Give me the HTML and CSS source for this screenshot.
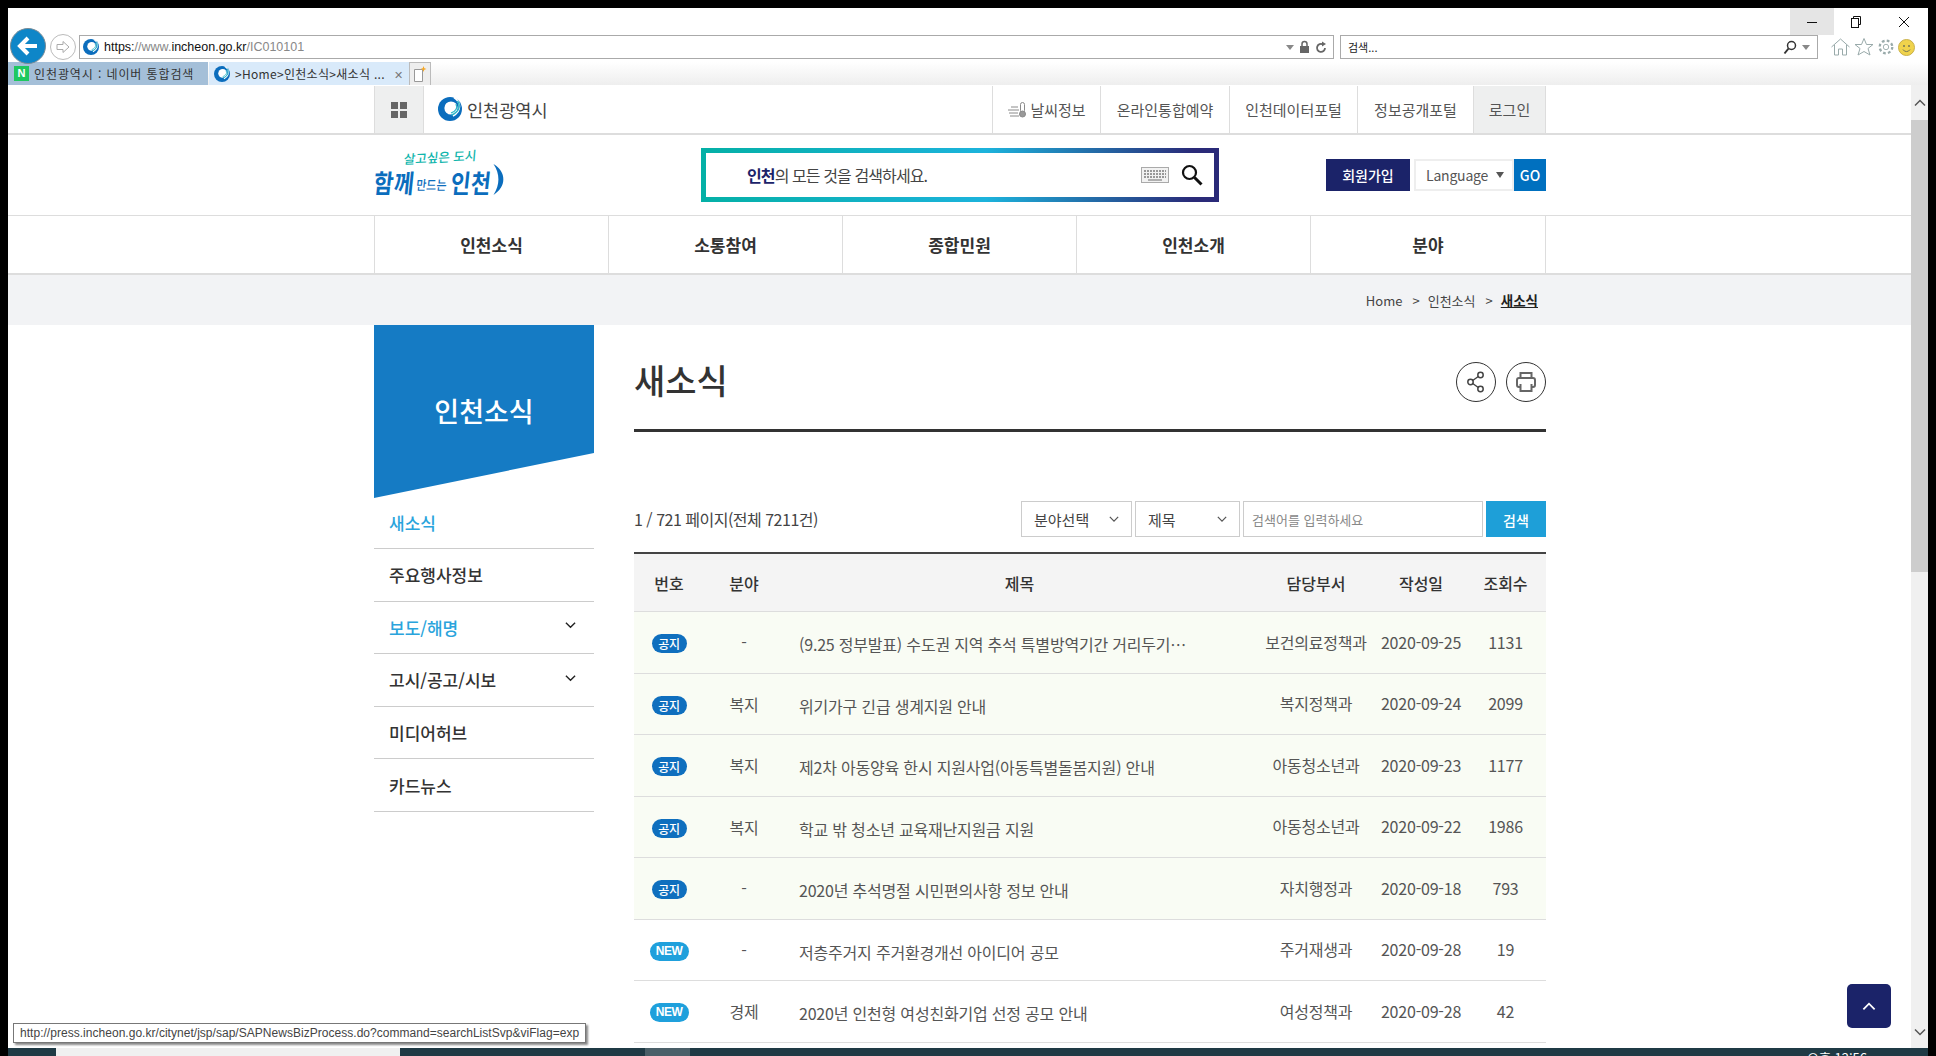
FILE: index.html
```html
<!DOCTYPE html>
<html lang="ko">
<head>
    <meta charset="UTF-8">
    <title>새소식 - 인천광역시</title>
    <link rel="stylesheet" href="styles.css">
</head>
<body>
    <svg class="defs" width="0" height="0">
        <symbol id="ic-mark" viewBox="0 0 24 24">
            <circle cx="12" cy="12" r="12" fill="#0b6dbd"/>
            <circle cx="13" cy="11" r="6.6" fill="#fff"/>
            <path d="M16 0.5C23 5 24 14 15 19" fill="none" stroke="#fff" stroke-width="1.6"/>
            <path d="M19.5 4C23 9 21 15 13.500 18" fill="none" stroke="#2cb5c8" stroke-width="1.5"/>
            <path d="M18 7C20 11 18 14 13 16" fill="none" stroke="#2cb5c8" stroke-width="1.3"/>
        </symbol>
        <symbol id="ic-chev" viewBox="0 0 12 8">
            <path d="M1 1.500L6 6.500L11 1.500" fill="none" stroke="currentColor" stroke-width="1.500"/>
        </symbol>
    </svg>
    <div class="screen">
        <div class="ie">
            <div class="ie-title">
                <span class="win-btn hot"><svg width="12" height="12"><path d="M1 6.500H11" stroke="#111" stroke-width="1"/></svg></span>
                <span class="win-btn"><svg width="12" height="12" fill="none" stroke="#111"><path d="M3.500 2.500V0.500H10.500V8.500H8.500"/><rect x="1.500" y="2.500" width="7" height="9"/></svg></span>
                <span class="win-btn"><svg width="12" height="12"><path d="M1 1L11 11M11 1L1 11" stroke="#111"/></svg></span>
            </div>
            <div class="ie-addr">
                <span class="nav-back"><svg width="22" height="22" viewBox="0 0 22 22"><path d="M11 3L3 11L11 19M3 11H20" fill="none" stroke="#fff" stroke-width="4"/></svg></span>
                <span class="nav-fwd"><svg width="16" height="16" viewBox="0 0 16 16"><path d="M8 2.500L14 8L8 13.500V10.500H2V5.500H8Z" fill="none" stroke="#aaa"/></svg></span>
                <div class="url-box">
                    <svg width="16" height="16"><use href="#ic-mark"/></svg>
                    <span class="url"><b>https:</b>//www.<b>incheon.go.kr</b>/IC010101</span>
                    <span class="url-tools">
                        <svg width="8" height="5"><path d="M0 0H8L4 5Z" fill="#888"/></svg>
                        <svg width="11" height="14"><path d="M3 6V4a2.500 2.500 0 0 1 5 0V6" fill="none" stroke="#666" stroke-width="1.500"/><rect x="1" y="6" width="9" height="7" fill="#666"/></svg>
                        <svg width="12" height="14" viewBox="0 0 12 14"><path d="M10 8a4 4 0 1 1-2-3.500" fill="none" stroke="#666" stroke-width="1.800"/><path d="M7 1.500L11 4L7 6.500Z" fill="#666"/></svg>
                    </span>
                </div>
                <div class="search-box">
                    <span class="search-hint">검색...</span>
                    <span class="url-tools">
                        <svg width="14" height="15" viewBox="0 0 14 15"><circle cx="8.500" cy="5.500" r="4" fill="none" stroke="#333" stroke-width="1.500"/><path d="M5.500 8.500L1.500 13.500" stroke="#333" stroke-width="2"/></svg>
                        <svg width="8" height="5"><path d="M0 0H8L4 5Z" fill="#888"/></svg>
                    </span>
                </div>
                <div class="ie-tools">
                    <svg width="21" height="20" viewBox="0 0 20 20" fill="none" stroke="#9aa"><path d="M1 10L10 2L19 10M4 8V18H8V12H12V18H16V8"/></svg>
                    <svg width="20" height="20" viewBox="0 0 20 20" fill="none" stroke="#9aa"><path d="M10 1.500L12.500 7.500H19L14 11.500L16 18L10 14.500L4 18L6 11.500L1 7.500H7.500Z"/></svg>
                    <svg width="18" height="18" viewBox="0 0 20 20" fill="none" stroke="#9aa"><circle cx="10" cy="10" r="3"/><circle cx="10" cy="10" r="7" stroke-width="2.500" stroke-dasharray="3 2.500"/></svg>
                    <svg width="17" height="17" viewBox="0 0 17 17"><circle cx="8.500" cy="8.500" r="8" fill="#f0d34c" stroke="#c9b04a"/><circle cx="6" cy="7" r="1" fill="#775"/><circle cx="11" cy="7" r="1" fill="#775"/><path d="M5 10.500a4 4 0 0 0 7 0" fill="none" stroke="#775"/></svg>
                </div>
            </div>
        </div>
        <div class="ie-tabs">
            <div class="tab tab-off">
                <span class="naver">N</span>
                <span class="tab-text">인천광역시 : 네이버 통합검색</span>
            </div>
            <div class="tab tab-on">
                <svg width="16" height="16"><use href="#ic-mark"/></svg>
                <span class="tab-text">&gt;Home&gt;인천소식&gt;새소식 ...</span>
                <span class="tab-x">✕</span>
            </div>
            <div class="tab-new">
                <svg width="14" height="17" viewBox="0 0 14 17"><path d="M1.500 3.500H9.500V15.500H1.500Z" fill="#fff" stroke="#999"/><path d="M10.500 0L11.300 2.200L13.500 3L11.300 3.800L10.500 6L9.700 3.800L7.500 3L9.700 2.200Z" fill="#f5a623"/></svg>
            </div>
        </div>

        <div class="viewport">
            <div class="page">
                <div class="topbar">
                    <div class="wrap topbar-in">
                        <a class="grid-btn"><svg width="16" height="16"><path d="M0 0h7v7H0zM9 0h7v7H9zM0 9h7v7H0zM9 9h7v7H9z" fill="#666"/></svg></a>
                        <div class="city">
                            <svg width="24" height="24"><use href="#ic-mark"/></svg>
                            <span>인천광역시</span>
                        </div>
                        <ul class="toplinks">
                            <li class="w-weather"><svg width="21" height="17" viewBox="0 0 21 17" fill="none" stroke="#8a8a8a"><path d="M1 9H12M2 12H11M3 15H12M4 6H11"/><rect x="13.500" y="1.500" width="4" height="10" rx="2"/><circle cx="15.500" cy="13" r="3" fill="#999"/></svg>날씨정보</li>
                            <li class="w-reserve">온라인통합예약</li>
                            <li class="w-data">인천데이터포털</li>
                            <li class="w-open">정보공개포털</li>
                            <li class="login">로그인</li>
                        </ul>
                    </div>
                </div>

                <div class="wrap header">
                    <div class="slogan">
                        <div class="slogan-top">살고싶은 도시</div>
                        <div class="slogan-main"><b>함께</b><small>만드는</small><b>인천</b></div>
                        <svg class="slogan-arc" width="16" height="33" viewBox="0 0 14 30"><path d="M2 1C14 8 14 22 2 29C8 20 8 10 2 1Z" fill="#0b6dbd"/></svg>
                    </div>
                    <div class="main-search">
                        <span class="ms-text"><b>인천</b>의 모든 것을 검색하세요.</span>
                        <svg width="28" height="16" viewBox="0 0 28 16"><rect x="0.500" y="0.500" width="27" height="15" fill="#f2f2f2" stroke="#aaa"/><path d="M3 4H25M3 7H25M3 10H25" stroke="#999" stroke-width="2" stroke-dasharray="2 1"/><path d="M7 13H21" stroke="#999" stroke-width="1.500"/></svg>
                        <svg class="ms-glass" width="22" height="22" viewBox="0 0 22 22"><circle cx="8.500" cy="8.500" r="6.500" fill="none" stroke="#111" stroke-width="2.200"/><path d="M13.500 13.500L20.500 20.500" stroke="#111" stroke-width="3"/></svg>
                    </div>
                    <div class="head-btns">
                        <a class="join">회원가입</a>
                        <div class="lang">Language<svg width="8" height="6"><path d="M0 0H8L4 6Z" fill="#555"/></svg></div>
                        <a class="go">GO</a>
                    </div>
                </div>

                <div class="gnb">
                    <ul class="wrap gnb-in">
                        <li>인천소식</li>
                        <li>소통참여</li>
                        <li>종합민원</li>
                        <li>인천소개</li>
                        <li>분야</li>
                    </ul>
                </div>

                <div class="crumb">
                    <div class="wrap crumb-in">
                        <span>Home</span><i>&gt;</i><span>인천소식</span><i>&gt;</i><strong>새소식</strong>
                    </div>
                </div>

                <div class="wrap content">
                    <aside class="side">
                        <h2 class="side-title">인천소식</h2>
                        <ul class="side-menu">
                            <li class="on">새소식</li>
                            <li>주요행사정보</li>
                            <li class="on">보도/해명<svg width="11" height="8"><use href="#ic-chev"/></svg></li>
                            <li>고시/공고/시보<svg width="11" height="8"><use href="#ic-chev"/></svg></li>
                            <li>미디어허브</li>
                            <li>카드뉴스</li>
                        </ul>
                    </aside>
                    <main class="main">
                        <div class="page-head">
                            <h1>새소식</h1>
                            <div class="head-icons">
                                <a class="circle"><svg width="20" height="22" viewBox="0 0 20 22" fill="none" stroke="#444" stroke-width="1.500"><circle cx="14.500" cy="4" r="2.700"/><circle cx="4.500" cy="11" r="2.700"/><circle cx="14.500" cy="18" r="2.700"/><path d="M12.300 5.500L6.700 9.500M6.700 12.500L12.300 16.500"/></svg></a>
                                <a class="circle"><svg width="20" height="22" viewBox="0 0 20 22" fill="none" stroke="#666" stroke-width="2"><path d="M4.500 7V2H15.500V7"/><rect x="1" y="7" width="18" height="9" rx="2"/><path d="M4.500 13V20H15.500V13" fill="#fff"/></svg></a>
                            </div>
                        </div>
                        <div class="toolbar">
                            <span class="count">1 / 721 페이지(전체 7211건)</span>
                            <div class="sel sel-field">분야선택<svg width="12" height="8"><use href="#ic-chev"/></svg></div>
                            <div class="sel sel-type">제목<svg width="12" height="8"><use href="#ic-chev"/></svg></div>
                            <input class="keyword" type="text" placeholder="검색어를 입력하세요">
                            <button class="btn-search" type="button">검색</button>
                        </div>
                        <table class="board">
                            <colgroup>
                                <col class="c-no"><col class="c-cat"><col class="c-title"><col class="c-dept"><col class="c-date"><col class="c-hit">
                            </colgroup>
                            <thead>
                                <tr><th>번호</th><th>분야</th><th>제목</th><th>담당부서</th><th>작성일</th><th>조회수</th></tr>
                            </thead>
                            <tbody>
                                <tr class="notice"><td class="no"><span class="badge">공지</span></td><td class="cat">-</td><td class="title">(9.25 정부발표) 수도권 지역 추석 특별방역기간 거리두기…</td><td>보건의료정책과</td><td>2020-09-25</td><td>1131</td></tr>
                                <tr class="notice"><td class="no"><span class="badge">공지</span></td><td class="cat">복지</td><td class="title">위기가구 긴급 생계지원 안내</td><td>복지정책과</td><td>2020-09-24</td><td>2099</td></tr>
                                <tr class="notice"><td class="no"><span class="badge">공지</span></td><td class="cat">복지</td><td class="title">제2차 아동양육 한시 지원사업(아동특별돌봄지원) 안내</td><td>아동청소년과</td><td>2020-09-23</td><td>1177</td></tr>
                                <tr class="notice"><td class="no"><span class="badge">공지</span></td><td class="cat">복지</td><td class="title">학교 밖 청소년 교육재난지원금 지원</td><td>아동청소년과</td><td>2020-09-22</td><td>1986</td></tr>
                                <tr class="notice"><td class="no"><span class="badge">공지</span></td><td class="cat">-</td><td class="title">2020년 추석명절 시민편의사항 정보 안내</td><td>자치행정과</td><td>2020-09-18</td><td>793</td></tr>
                                <tr><td class="no"><span class="badge new">NEW</span></td><td class="cat">-</td><td class="title">저층주거지 주거환경개선 아이디어 공모</td><td>주거재생과</td><td>2020-09-28</td><td>19</td></tr>
                                <tr><td class="no"><span class="badge new">NEW</span></td><td class="cat">경제</td><td class="title">2020년 인천형 여성친화기업 선정 공모 안내</td><td>여성정책과</td><td>2020-09-28</td><td>42</td></tr>
                            </tbody>
                        </table>
                    </main>
                </div>
            </div>
            <div class="scrollbar">
                <span class="arrow"><svg width="12" height="8"><use href="#ic-chev"/></svg></span>
                <span class="thumb"></span>
                <span class="arrow down"><svg width="12" height="8"><use href="#ic-chev"/></svg></span>
            </div>
            <a class="to-top"><svg width="14" height="9" viewBox="0 0 12 8"><path d="M1 6.500L6 1.500L11 6.500" fill="none" stroke="#fff" stroke-width="1.600"/></svg></a>
            <div class="status-tip">http://press.incheon.go.kr/citynet/jsp/sap/SAPNewsBizProcess.do?command=searchListSvp&amp;viFlag=exp</div>
        </div>

        <div class="taskbar">
            <span class="task-start"></span>
            <span class="task-app"></span>
            <span class="task-gap"></span>
            <span class="task-hot"></span>
            <span class="task-rest"></span>
            <span class="clock">오후 12:56</span>
            <span class="task-end"></span>
        </div>
    </div>
</body>
</html>
```

FILE: styles.css
```css
* { box-sizing: border-box; }
html, body { margin: 0; height: 100%; }
body { background: #000; overflow: hidden; font-family: "Noto Sans CJK KR", "Noto Sans", sans-serif; color: #333; }
ul { list-style: none; margin: 0; padding: 0; }
h1, h2 { margin: 0; }
.defs { position: absolute; }
.screen { height: 1056px; padding: 8px 8px 0; display: flex; flex-direction: column; }

/* browser chrome */
.ie { background: #fff; height: 54px; flex: none; }
.ie-title { height: 27px; display: flex; justify-content: flex-end; padding-right: 2px; }
.win-btn { width: 44px; display: flex; align-items: center; justify-content: center; }
.win-btn:last-child { margin-left: 4px; }
.win-btn.hot { background: #e5e5e5; }
.ie-addr { height: 24px; display: flex; align-items: center; }
.nav-back { width: 36px; height: 36px; flex: none; margin: -2px 0 0 2px; border-radius: 50%; background: #0e86c8; border: 1px solid #7a8b96; display: flex; align-items: center; justify-content: center; position: relative; z-index: 2; }
.nav-fwd { width: 26px; height: 26px; flex: none; margin-left: 4px; border-radius: 50%; border: 1px solid #bbb; display: flex; align-items: center; justify-content: center; }
.url-box { width: 1255px; flex: none; height: 24px; margin-left: 3px; border: 1px solid #aaa; display: flex; align-items: center; padding: 0 6px 0 3px; }
.url { margin-left: 5px; font: 12.5px "Liberation Sans", sans-serif; color: #888; flex: 1; }
.url b { font-weight: normal; color: #111; }
.url-tools { display: flex; align-items: center; gap: 5px; }
.search-box { width: 478px; flex: none; height: 24px; margin-left: 6px; border: 1px solid #aaa; display: flex; align-items: center; justify-content: space-between; padding: 0 7px; }
.search-hint { font-size: 11px; color: #222; }
.ie-tools { display: flex; align-items: center; gap: 3px; margin-left: 12px; }

.ie-tabs { height: 23px; flex: none; display: flex; background: linear-gradient(#fff, #eeeeee); }
.tab { width: 200px; display: flex; align-items: center; padding-left: 6px; font-size: 12px; color: #333; white-space: nowrap; }
.tab-off { background: #a4bfd8; }
.tab-on { background: #d9eafa; margin-left: 1px; padding-left: 5px; }
.tab-text { margin-left: 5px; letter-spacing: 0.9px; }
.tab-on .tab-text { letter-spacing: 0.3px; flex: 1; }
.tab-x { color: #777; font-size: 11px; margin-right: 6px; }
.naver { width: 15px; height: 15px; background: #1ec85f; color: #fff; font: bold 11px/15px "Liberation Sans", sans-serif; text-align: center; }
.tab-new { width: 22px; background: #eee; border: 1px solid #bbb; border-bottom: 0; display: flex; align-items: center; justify-content: center; }

/* page */
.viewport { flex: 1; display: flex; position: relative; overflow: hidden; background: #fff; }
.page { flex: 1; overflow: hidden; }
.wrap { width: 1172px; margin-left: 366px; }

.topbar { height: 50px; border-bottom: 2px solid #ddd; }
.topbar-in { display: flex; height: 48px; align-items: stretch; }
.grid-btn { width: 50px; background: #eeefef; border: solid #ddd; border-width: 0 1px; display: flex; align-items: center; justify-content: center; margin-top: 1px; }
.city { display: flex; align-items: center; gap: 5px; margin-left: 14px; font-size: 17.5px; color: #444; }
.toplinks { margin-left: auto; display: flex; font-size: 15px; color: #555; }
.toplinks li { display: flex; align-items: center; justify-content: center; border-left: 1px solid #ddd; margin-top: 1px; }
.w-weather { width: 108px; }
.w-weather svg { margin-right: 2px; }
.w-reserve { width: 129px; }
.w-data { width: 128px; }
.w-open { width: 116px; }
.toplinks .login { width: 73px; background: #eeefef; border-right: 1px solid #ddd; }

/* slogan lettering is hand drawn in the original, so it only gets a slant here */
.header { height: 80px; display: flex; align-items: center; }
.slogan { width: 327px; height: 50px; margin-top: 2px; position: relative; color: #0b6dbd; }
.slogan-top { margin-left: 30px; font-size: 12.500px; line-height: 15px; font-weight: 500; color: #10b5ac; transform: rotate(-3deg) skewX(-8deg); transform-origin: left; white-space: nowrap; }
.slogan-main { display: flex; align-items: center; line-height: 26px; margin-top: 1px; transform: skewX(-6deg) scaleY(1.2); white-space: nowrap; }
.slogan-main b { font-size: 21.500px; letter-spacing: 0.5px; }
.slogan-main small { font-size: 11px; font-weight: 500; margin: 4px 4px 0 2px; }
.slogan-arc { position: absolute; left: 117px; top: 12px; }
.main-search { width: 518px; height: 54px; border: 5px solid; border-image: linear-gradient(90deg, #04b0a6, #1cb3dc 55%, #2a2a78 95%) 5; display: flex; align-items: center; padding: 0 11px 0 41px; }
.ms-text { flex: 1; font-size: 16px; color: #444; letter-spacing: -0.9px; }
.ms-text b { color: #1b2369; }
.ms-glass { margin-left: 12px; }
.head-btns { margin-left: auto; display: flex; height: 32px; font-size: 14px; }
.join { width: 84px; background: #1b2369; color: #fff; display: flex; align-items: center; justify-content: center; font-weight: 500; }
.lang { width: 100px; margin-left: 4px; border: 2px solid #eee; color: #555; display: flex; align-items: center; padding-left: 10px; gap: 8px; letter-spacing: -0.2px; }
.go { width: 32px; background: #0070bf; color: #fff; display: flex; align-items: center; justify-content: center; font-weight: 500; }

.gnb { height: 60px; border-top: 1px solid #ddd; border-bottom: 2px solid #ddd; }
.gnb-in { display: flex; height: 57px; border-right: 1px solid #ddd; }
.gnb-in li { flex: 0 0 234px; border-left: 1px solid #ddd; display: flex; align-items: center; justify-content: center; font-size: 17px; font-weight: 700; color: #333; }
.gnb-in li:last-child { flex: 1; }

.crumb { height: 50px; background: #f2f3f5; }
.crumb-in { height: 50px; display: flex; align-items: center; justify-content: flex-end; padding-right: 8px; font-size: 13px; color: #444; }
.crumb-in i { font-style: normal; margin: 0 8px 0 10px; }
.crumb-in strong { font-size: 13.500px; font-weight: 700; text-decoration: underline; color: #222; }

.content { display: flex; align-items: flex-start; }
.side { width: 220px; flex: none; }
.side-title { height: 173px; padding-bottom: 2px; background: #157bc4; color: #fff; font-size: 27px; font-weight: 500; display: flex; align-items: center; justify-content: center; clip-path: polygon(0 0, 100% 0, 100% 128px, 0 100%); }
.side-menu li { height: 52.600px; border-bottom: 1px solid #ccc; display: flex; align-items: center; justify-content: space-between; padding: 0 18px 0 15px; font-size: 17px; font-weight: 500; color: #333; }
.side-menu li:first-child { height: 51px; padding-bottom: 2px; }
.side-menu li.on { color: #2aa4dc; }
.side-menu svg { color: #222; margin-top: -4px; }

.main { width: 912px; margin-left: 40px; }
.page-head { height: 107px; padding: 37px 0 27px; border-bottom: 3px solid #333; display: flex; justify-content: space-between; align-items: center; }
.page-head h1 { font-size: 34px; font-weight: 500; color: #333; margin-bottom: 5px; }
.head-icons { display: flex; gap: 10px; }
.circle { width: 40px; height: 40px; border: 1px solid #333; border-radius: 50%; display: flex; align-items: center; justify-content: center; }

.toolbar { margin-top: 69px; height: 36px; display: flex; align-items: center; font-size: 15px; }
.count { flex: 1; font-size: 16px; color: #444; letter-spacing: -0.5px; }
.sel { height: 36px; border: 1px solid #ccc; display: flex; align-items: center; justify-content: space-between; padding: 0 12px; color: #444; margin-right: 3px; }
.sel svg { width: 10px; color: #555; }
.sel-field { width: 111px; }
.sel-type { width: 105px; }
.keyword { width: 240px; height: 36px; border: 1px solid #ccc; padding: 0 8px; font: 13px "Noto Sans CJK KR", sans-serif; }
.keyword::placeholder { color: #888; }
.btn-search { width: 60px; height: 36px; margin-left: 3px; border: 0; background: #1e9fd8; color: #fff; font: 500 14px "Noto Sans CJK KR", sans-serif; padding-top: 3px; }

.board { width: 100%; margin-top: 15px; border-collapse: separate; border-spacing: 0; table-layout: fixed; border-top: 2px solid #444; }
.c-no { width: 70px; }
.c-cat { width: 80px; }
.c-title { width: 471px; }
.c-dept { width: 122px; }
.c-date { width: 88px; }
.c-hit { width: 81px; }
.board th { height: 58px; background: #f4f4f4; border-bottom: 1px solid #ddd; font-size: 16px; font-weight: 500; color: #333; padding: 0; }
.board td { height: 61.500px; border-bottom: 1px solid #ddd; text-align: center; font-size: 16px; color: #555; padding: 0 0 1px; letter-spacing: -0.2px; }
.notice td { background: #f9fcf4; }
.board .no { padding: 0 0 2px; }
.board .cat { padding: 0; }
.board .title { text-align: left; padding: 4px 0 0 15px; white-space: nowrap; }
.badge { display: inline-block; width: 35px; height: 19px; border-radius: 10px; background: #0f6fbe; color: #fff; font-size: 12px; line-height: 19px; font-weight: 500; vertical-align: middle; }
.badge.new { width: 39px; background: #1fa0dc; font-family: "Liberation Sans", sans-serif; font-weight: 700; letter-spacing: -0.5px; }

.scrollbar { width: 17px; flex: none; background: #f0f0f0; display: flex; flex-direction: column; align-items: center; }
.arrow { height: 35px; display: flex; align-items: center; justify-content: center; color: #555; flex: none; }
.arrow svg { transform: rotate(180deg); }
.arrow.down { margin-top: auto; height: 27px; padding-bottom: 6px; }
.arrow.down svg { transform: none; }
.thumb { width: 17px; height: 452px; background: #cdcdcd; }

.to-top { position: absolute; left: 1839px; top: 899px; width: 44px; height: 44px; border-radius: 5px; background: #1b2369; display: flex; align-items: center; justify-content: center; }
.status-tip { position: absolute; left: 5px; top: 938px; width: 573px; height: 20px; border: 1px solid #777; background: #fff; box-shadow: 2px 2px 2px #888; padding: 0 0 0 6px; font: 12px/18px "Liberation Sans", sans-serif; color: #444; letter-spacing: 0.03px; white-space: nowrap; overflow: hidden; }

.taskbar { height: 8px; flex: none; display: flex; background: #1f3a45; overflow: hidden; position: relative; }
.task-start { width: 48px; }
.task-app { width: 344px; background: #f0f0f0; }
.task-gap { width: 245px; }
.task-hot { width: 45px; background: #4a5f68; }
.task-rest { flex: 1; }
.clock { position: absolute; left: 1799px; top: 2px; font-size: 13px; line-height: 16px; color: #fff; }
.task-end { width: 5px; }
```
